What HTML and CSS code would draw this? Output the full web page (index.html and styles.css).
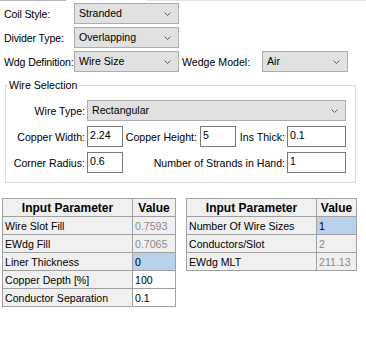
FILE: index.html
```html
<!DOCTYPE html>
<html lang="en">
<head>
    <meta charset="UTF-8" />
    <meta name="viewport" content="width=device-width, initial-scale=1.0" />
    <title>Winding Setup</title>
    <link rel="stylesheet" href="styles.css">
</head>
<body>
    <div class="top-rule">
      <span class="rule-dark"></span>
      <span class="rule-gap"></span>
      <span class="rule-light"></span>
    </div>

    <div class="form">
      <div class="row">
        <span class="lbl">Coil Style:</span>
        <div class="combo w-main">Stranded
          <svg class="chev" width="7" height="4" viewBox="0 0 7 4"><polyline points="0.5,0.5 3.5,3.5 6.5,0.5" /></svg>
        </div>
      </div>
      <div class="row">
        <span class="lbl">Divider Type:</span>
        <div class="combo w-main">Overlapping
          <svg class="chev" width="7" height="4" viewBox="0 0 7 4"><polyline points="0.5,0.5 3.5,3.5 6.5,0.5" /></svg>
        </div>
      </div>
      <div class="row">
        <span class="lbl">Wdg Definition:</span>
        <div class="combo w-main">Wire Size
          <svg class="chev" width="7" height="4" viewBox="0 0 7 4"><polyline points="0.5,0.5 3.5,3.5 6.5,0.5" /></svg>
        </div>
        <span class="lbl-wedge">Wedge Model:</span>
        <div class="combo w-wedge">Air
          <svg class="chev" width="7" height="4" viewBox="0 0 7 4"><polyline points="0.5,0.5 3.5,3.5 6.5,0.5" /></svg>
        </div>
      </div>
    </div>

    <fieldset class="group">
      <legend>Wire Selection</legend>
      <div class="grow first">
        <span class="glbl">Wire Type:</span>
        <div class="combo w-wire">Rectangular
          <svg class="chev" width="7" height="4" viewBox="0 0 7 4"><polyline points="0.5,0.5 3.5,3.5 6.5,0.5" /></svg>
        </div>
      </div>
      <div class="grow">
        <span class="glbl">Copper Width:</span>
        <div class="tbox w-small">2.24</div>
        <span class="glbl w-height">Copper Height:</span>
        <div class="tbox w-small">5</div>
        <span class="glbl w-ins">Ins Thick:</span>
        <div class="tbox w-wide">0.1</div>
      </div>
      <div class="grow">
        <span class="glbl">Corner Radius:</span>
        <div class="tbox w-small">0.6</div>
        <span class="glbl w-strands">Number of Strands in Hand:</span>
        <div class="tbox w-wide">1</div>
      </div>
    </fieldset>

    <div class="grids">
      <table class="grid grid-left">
        <colgroup><col class="c-param" /><col class="c-val-l" /></colgroup>
        <thead>
          <tr><th>Input Parameter</th><th>Value</th></tr>
        </thead>
        <tbody>
          <tr><td>Wire Slot Fill</td><td class="ro">0.7593</td></tr>
          <tr><td>EWdg Fill</td><td class="ro">0.7065</td></tr>
          <tr><td>Liner Thickness</td><td class="sel">0</td></tr>
          <tr><td>Copper Depth [%]</td><td class="edit">100</td></tr>
          <tr><td>Conductor Separation</td><td class="edit">0.1</td></tr>
        </tbody>
      </table>

      <table class="grid grid-right">
        <colgroup><col class="c-param" /><col class="c-val-r" /></colgroup>
        <thead>
          <tr><th>Input Parameter</th><th>Value</th></tr>
        </thead>
        <tbody>
          <tr><td>Number Of Wire Sizes</td><td class="sel">1</td></tr>
          <tr><td>Conductors/Slot</td><td class="ro">2</td></tr>
          <tr><td>EWdg MLT</td><td class="ro">211.13</td></tr>
        </tbody>
      </table>
    </div>
</body>
</html>
```

FILE: styles.css
```css
body {
  margin: 0;
  background: #ffffff;
  font-family: "Liberation Sans", Arial, sans-serif;
  font-size: 10.6px;
  color: #000000;
}
.top-rule {
  display: flex;
  height: 1px;
}
.rule-dark {
  width: 66px;
  background: #b9b9b9;
}
.rule-gap {
  width: 80px;
}
.rule-light {
  flex: 1;
  background: #e3e3e3;
}
.form {
  padding: 2px 0 0 4px;
  display: flex;
  flex-direction: column;
  gap: 3px;
}
.row {
  display: flex;
  align-items: center;
  height: 21px;
}
.lbl {
  flex-shrink: 0;
  min-width: 70px;
  letter-spacing: -0.15px;
  white-space: nowrap;
}
.lbl-wedge {
  width: 80px;
  padding-left: 3px;
  white-space: nowrap;
}
.combo {
  position: relative;
  box-sizing: border-box;
  height: 21px;
  line-height: 19px;
  padding-left: 4px;
  background: #e1e1e1;
  border: 1px solid #adadad;
  white-space: nowrap;
}
.chev {
  position: absolute;
  right: 7px;
  top: 8px;
}
.chev polyline {
  fill: none;
  stroke: #606060;
  stroke-width: 1;
}
.w-main {
  width: 105px;
}
.w-wedge {
  width: 86px;
}
.w-wire {
  width: 259px;
}
.group {
  box-sizing: border-box;
  width: 351px;
  min-width: 0;
  margin: 7px 0 0 5px;
  padding: 0 0 9px 0;
  border: 1px solid #dcdcdc;
}
.group legend {
  margin-left: 2px;
  padding: 0 1px;
  line-height: 13px;
}
.grow {
  display: flex;
  align-items: center;
  margin-top: 5px;
}
.grow.first {
  margin-top: 8px;
}
.glbl {
  box-sizing: border-box;
  width: 81px;
  padding-right: 2px;
  text-align: right;
  white-space: nowrap;
}
.w-height {
  width: 77px;
  padding-right: 3px;
}
.w-ins {
  width: 51px;
}
.w-strands {
  width: 164px;
}
.tbox {
  box-sizing: border-box;
  height: 21px;
  line-height: 17px;
  padding-left: 2px;
  background: #ffffff;
  border: 1px solid #7a7a7a;
}
.w-small {
  width: 36px;
}
.w-wide {
  width: 59px;
}
.grids {
  display: flex;
  align-items: flex-start;
  gap: 10px;
  margin: 15px 0 0 2px;
}
.grid {
  border-collapse: collapse;
  table-layout: fixed;
  border: 1px solid #8e8f8f;
}
.grid-left {
  width: 174px;
}
.grid-right {
  width: 171px;
}
.c-param {
  width: 130px;
}
.c-val-l {
  width: 43px;
}
.c-val-r {
  width: 40px;
}
.grid th,
.grid td {
  height: 17px;
  padding: 0 0 0 2px;
  border: 1px solid #a0a0a0;
  white-space: nowrap;
  overflow: hidden;
  text-align: left;
  font-size: 10.6px;
  font-weight: normal;
}
.grid th {
  background: #f0f0f0;
  font-weight: bold;
  text-align: center;
  padding: 0;
  font-size: 12px;
}
.grid td {
  background: #f0f0f0;
}
.grid td.ro {
  color: #8a8a8a;
}
.grid td.edit {
  background: #ffffff;
}
.grid td.sel {
  background: #b9d1ea;
}
```
